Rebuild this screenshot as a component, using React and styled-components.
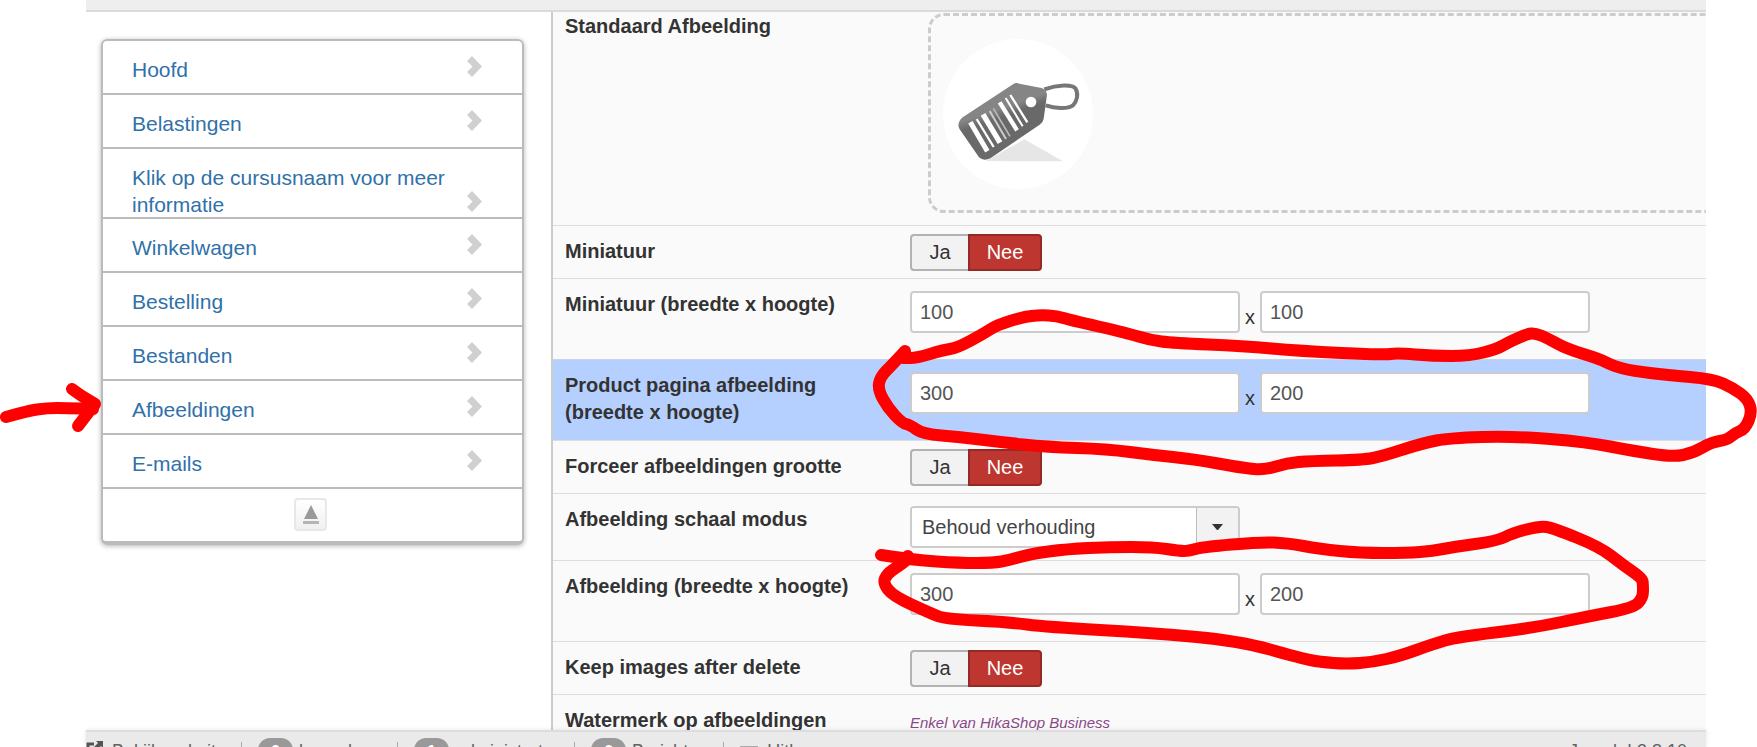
import { useState } from 'react';
import styled, { createGlobalStyle } from 'styled-components';

const menuItems = [
  'Hoofd',
  'Belastingen',
  'Klik op de cursusnaam voor meer informatie',
  'Winkelwagen',
  'Bestelling',
  'Bestanden',
  'Afbeeldingen',
  'E-mails',
];

const statusItems = [
  { count: 0, label: 'bezoekers' },
  { count: 1, label: 'administrator' },
  { count: 0, label: 'Berichten' },
];

// hand drawn markers, as points along each stroke
const strokes = [
  [[6, 417], [27, 411], [47, 408], [67, 408], [93, 409]],
  [[72, 389], [80, 395], [95, 404], [95, 404], [88, 413], [78, 426]],
  [
    [905, 351], [893, 364], [880, 377], [878, 390], [888, 408], [902, 423], [910, 425], [923, 434],
    [960, 437], [1000, 442], [1047, 447], [1107, 449], [1153, 455], [1193, 459], [1243, 468],
    [1265, 470], [1287, 463], [1310, 461], [1363, 460], [1383, 456], [1423, 443], [1450, 438],
    [1513, 436], [1587, 442], [1633, 451], [1673, 457], [1693, 453], [1712, 442], [1727, 440],
    [1735, 433], [1745, 429], [1752, 413], [1748, 399], [1733, 388], [1713, 379], [1667, 375],
    [1633, 371], [1613, 366], [1600, 359], [1567, 349], [1547, 338], [1535, 333], [1527, 334],
    [1507, 343], [1497, 349], [1470, 356], [1433, 356], [1397, 353], [1383, 355], [1300, 351],
    [1243, 346], [1173, 343], [1150, 340], [1127, 333], [1070, 320], [1057, 316], [1040, 315],
    [1023, 317], [997, 325], [983, 334], [957, 348], [943, 350], [917, 358], [903, 358],
  ],
  [
    [881, 555], [913, 560], [960, 563], [993, 563], [1010, 560], [1030, 554], [1067, 549],
    [1110, 547], [1153, 547], [1180, 551], [1188, 551], [1203, 547], [1260, 542], [1287, 543],
    [1320, 549], [1360, 553], [1407, 553], [1433, 551], [1453, 547], [1497, 541], [1513, 533],
    [1540, 526], [1553, 528], [1600, 547], [1623, 565], [1642, 578], [1643, 584], [1643, 598],
    [1633, 608], [1590, 616], [1533, 628], [1457, 637], [1433, 644], [1400, 656], [1373, 662],
    [1347, 664], [1320, 662], [1300, 658], [1240, 641], [1153, 633], [1047, 627], [1007, 622],
    [945, 619], [930, 613], [893, 596], [883, 583], [887, 574], [897, 567], [907, 560], [908, 556],
  ],
];

const toPath = (points) => {
  const last = points[points.length - 1];
  const curves = points.slice(1, -1).map(([x, y], i) => {
    const [nx, ny] = points[i + 2];
    return `Q${x} ${y} ${(x + nx) / 2} ${(y + ny) / 2}`;
  });
  return `M${points[0].join(' ')} ${curves.join(' ')} L${last.join(' ')}`;
};

const TagPicture = () => (
  <svg width="150" height="150" viewBox="42 -63 450 450" role="img" aria-label="Standaard afbeelding">
    <defs>
      <linearGradient id="tagFill" x1="0" y1="0" x2="0.4" y2="1">
        <stop offset="0.45" stopColor="#858585" />
        <stop offset="0.55" stopColor="#696969" />
      </linearGradient>
    </defs>
    <circle cx="267" cy="162" r="225" fill="#fff" />
    <path d="M170 303L286 238L402 304Z" fill="#e6e6e6" />
    <path
      d="M346 88C385 74 430 72 440 86C449 102 444 124 432 136C414 149 376 144 350 136"
      fill="none"
      stroke="#777"
      strokeWidth="12"
    />
    <path
      d="M252 73Q261 66 271 71L338 84Q352 88 354 104L344 176Q342 188 332 194L184 295Q164 305 150 292L92 208Q83 193 95 178Q99 172 108 167Z"
      fill="url(#tagFill)"
    />
    <circle cx="306" cy="126" r="16" fill="#fff" />
    <g stroke="#fff" fill="none">
      <path d="M124 187L175 274" strokeWidth="15" />
      <path d="M143 177L194 261" strokeWidth="7" />
      <path d="M162 163L213 248" strokeWidth="16" />
      <path d="M182 153L231 237" strokeWidth="6" stroke="#ccc" />
      <path d="M193 145L243 229" strokeWidth="5" stroke="#bbb" />
      <path d="M212 127L264 211" strokeWidth="13" />
      <path d="M230 114L281 199" strokeWidth="6" />
      <path d="M244 105L295 187" strokeWidth="7" />
    </g>
  </svg>
);

const Chevron = () => (
  <svg width="15" height="21" viewBox="0 0 15 21" aria-hidden="true">
    <path d="M0 5L5 0L15 10.500L5 21L0 16L5.500 10.500Z" fill="#d0d0d0" />
  </svg>
);

const YesNo = ({ label }) => {
  const [value, setValue] = useState(false);
  return (
    <ButtonGroup role="group" aria-label={label}>
      <YesButton type="button" aria-pressed={value} onClick={() => setValue(true)}>
        Ja
      </YesButton>
      <NoButton type="button" aria-pressed={!value} onClick={() => setValue(false)}>
        Nee
      </NoButton>
    </ButtonGroup>
  );
};

const SizeFields = ({ id, label, width, height }) => (
  <Sizes>
    <TextInput id={id} type="text" defaultValue={width} />
    <Times>x</Times>
    <TextInput type="text" defaultValue={height} aria-label={`${label} hoogte`} />
  </Sizes>
);

const App = () => (
  <>
    <GlobalStyle />
    <Page>
      <TopBar />
      <Content>
        <Sidebar>
          <Menu>
            {menuItems.map((item) => (
              <MenuLink href="#" key={item} $long={item.length > 30}>
                <span>{item}</span>
                <Chevron />
              </MenuLink>
            ))}
            <MenuFooter>
              <CollapseButton type="button" aria-label="Inklappen">
                <svg width="16" height="20" viewBox="0 0 16 20" aria-hidden="true">
                  <path d="M8 0L15 14H1Z" fill="#999" />
                  <path d="M0 16H16V19H0Z" fill="#b5b5b5" />
                </svg>
              </CollapseButton>
            </MenuFooter>
          </Menu>
        </Sidebar>
        <Settings>
          <ImageRow>
            <Name as="span">Standaard Afbeelding</Name>
            <DropZone>
              <TagPicture />
            </DropZone>
          </ImageRow>
          <Row>
            <Name as="span">Miniatuur</Name>
            <YesNo label="Miniatuur" />
          </Row>
          <Row>
            <Name htmlFor="thumb">Miniatuur (breedte x hoogte)</Name>
            <SizeFields id="thumb" label="Miniatuur" width="100" height="100" />
          </Row>
          <Row $active>
            <Name htmlFor="product">
              Product pagina afbeelding
              <br />
              (breedte x hoogte)
            </Name>
            <SizeFields id="product" label="Product pagina afbeelding" width="300" height="200" />
          </Row>
          <Row>
            <Name as="span">Forceer afbeeldingen grootte</Name>
            <YesNo label="Forceer afbeeldingen grootte" />
          </Row>
          <Row>
            <Name htmlFor="scale">Afbeelding schaal modus</Name>
            <SelectBox>
              <Select id="scale" defaultValue="keep">
                <option value="keep">Behoud verhouding</option>
              </Select>
              <SelectArrow>
                <svg width="11" height="6" viewBox="0 0 11 6" aria-hidden="true">
                  <path d="M0 0H11L6 6H5Z" fill="#333" />
                </svg>
              </SelectArrow>
            </SelectBox>
          </Row>
          <Row>
            <Name htmlFor="image">Afbeelding (breedte x hoogte)</Name>
            <SizeFields id="image" label="Afbeelding" width="300" height="200" />
          </Row>
          <Row>
            <Name as="span">Keep images after delete</Name>
            <YesNo label="Keep images after delete" />
          </Row>
          <Row>
            <Name as="span">Watermerk op afbeeldingen</Name>
            <Hint href="#">Enkel van HikaShop Business</Hint>
          </Row>
        </Settings>
      </Content>
      <StatusBar>
        <StatusLink href="#">
          <svg width="17" height="17" viewBox="0 0 17 17" aria-hidden="true">
            <path d="M8 3H2V15H14V11" fill="none" stroke="#555" strokeWidth="3" />
            <path d="M10 0H17V7L15 5L9 11L6 8L12 2Z" fill="#555" />
          </svg>
          Bekijk website
        </StatusLink>
        {statusItems.map(({ count, label }) => (
          <StatusItem key={label}>
            <Badge>{count}</Badge>
            {label}
          </StatusItem>
        ))}
        <StatusItem>
          <Dash />
          Uitloggen
        </StatusItem>
        <Version>Joomla! 3.8.10</Version>
      </StatusBar>
    </Page>
    <Markers aria-hidden="true">
      {strokes.map((points) => (
        <path key={points[0].join()} d={toPath(points)} />
      ))}
    </Markers>
  </>
);

const GlobalStyle = createGlobalStyle`
  * {
    box-sizing: border-box;
  }

  body {
    margin: 0;
    overflow: hidden;
    background: #fff;
    color: #333;
    font-family: 'Liberation Sans', Arial, sans-serif;
    font-size: 20px;
    line-height: 27px;
  }

  a {
    text-decoration: none;
  }

  button,
  input,
  select {
    margin: 0;
    font: inherit;
  }
`;

const Page = styled.div`
  display: flex;
  flex-direction: column;
  height: 100vh;
  padding: 0 51px 0 86px;
  overflow: hidden;
`;

const TopBar = styled.header`
  flex: none;
  height: 12px;
  background: #eee;
  border-bottom: 2px solid #dadada;
`;

const Content = styled.div`
  display: flex;
  flex: 1;
  min-height: 0;
  overflow: hidden;
`;

const Sidebar = styled.aside`
  flex: none;
  width: 465px;
  padding: 27px 27px 0 15px;
`;

const Menu = styled.nav`
  border: 2px solid #bbb;
  border-bottom-width: 4px;
  border-radius: 6px;
  box-shadow: 0 1px 5px rgba(0, 0, 0, 0.3);
`;

const MenuLink = styled.a`
  display: flex;
  justify-content: space-between;
  height: ${(props) => (props.$long ? '70px' : '54px')};
  padding: 15px 40px 0 29px;
  border-bottom: 2px solid #bbb;
  color: #3071a9;
  font-size: 21px;

  span {
    max-width: 320px;
  }

  svg {
    flex: none;
    margin-top: ${(props) => (props.$long ? '27px' : '0')};
  }
`;

const MenuFooter = styled.div`
  display: flex;
  justify-content: center;
  height: 52px;
  padding: 9px 4px 0 0;
`;

const CollapseButton = styled.button`
  display: flex;
  justify-content: center;
  align-items: center;
  width: 33px;
  height: 33px;
  padding: 0;
  background: linear-gradient(#fff, #f0f0f0);
  border: 2px solid #e8e8e8;
  border-radius: 4px;
`;

const Settings = styled.form`
  flex: 1;
  min-width: 0;
  overflow: hidden;
  background: #fafafa;
  border-left: 2px solid #ccc;
`;

const Row = styled.div`
  display: flex;
  align-items: flex-start;
  padding-left: 12px;
  border-top: 1px solid ${(props) => (props.$active ? '#c8d4e8' : '#ddd')};
  background: ${(props) => (props.$active ? '#b5d0ff' : 'transparent')};
`;

const ImageRow = styled.div`
  display: flex;
  height: 213px;
  padding-left: 12px;
`;

const Name = styled.label`
  flex: none;
  width: 345px;
  padding-top: 12px;
  font-weight: 700;

  ${ImageRow} & {
    padding-top: 1px;
  }
`;

const DropZone = styled.div`
  flex: 1;
  height: 200px;
  margin: 1px -20px 0 18px;
  padding: 23px 12px;
  border: 3px dashed #ccc;
  border-radius: 16px;
`;

const ButtonGroup = styled.div`
  display: flex;
  padding: 8px 0 7px;
`;

const YesButton = styled.button`
  width: 58px;
  height: 37px;
  padding: 0;
  background: #f2f2f2;
  border: 2px solid #b3b3b3;
  border-right: 0;
  border-radius: 4px 0 0 4px;
  color: #333;
`;

const NoButton = styled.button`
  width: 74px;
  height: 37px;
  padding: 0;
  background: #bd362f;
  border: 2px solid #942a25;
  border-radius: 0 4px 4px 0;
  color: #fff;
`;

const Sizes = styled.div`
  display: flex;
  padding: 12px 0 26px;
`;

const TextInput = styled.input`
  width: 330px;
  height: 42px;
  padding: 0 8px;
  background: #fff;
  border: 2px solid #ccc;
  border-radius: 4px;
  color: #555;
`;

const Times = styled.span`
  width: 20px;
  padding-top: 13px;
  text-align: center;
`;

const SelectBox = styled.div`
  display: flex;
  width: 330px;
  height: 42px;
  margin: 12px 0;
  overflow: hidden;
  background: #fff;
  border: 2px solid #ccc;
  border-radius: 4px;
`;

const Select = styled.select`
  flex: 1;
  min-width: 0;
  padding: 0 10px;
  appearance: none;
  background: #fff;
  border: 0;
  color: #444;
`;

const SelectArrow = styled.span`
  display: flex;
  justify-content: center;
  align-items: center;
  width: 42px;
  background: #f2f2f2;
  border-left: 1px solid #bbb;
  pointer-events: none;
`;

const Hint = styled.a`
  padding-top: 14px;
  color: #8b4789;
  font-size: 15px;
  font-style: italic;
`;

const StatusBar = styled.footer`
  display: flex;
  flex: none;
  height: 17px;
  padding: 5px 19px 0 0;
  overflow: hidden;
  background: #eaeaea;
  border-top: 2px solid #ddd;
  box-shadow: 0 0 5px rgba(0, 0, 0, 0.1);
  color: #626262;
  font-size: 18px;
  line-height: 28px;
  white-space: nowrap;
`;

const StatusLink = styled.a`
  display: flex;
  gap: 9px;
  width: 155px;
  color: #626262;

  svg {
    flex: none;
    margin-top: 4px;
  }
`;

const StatusItem = styled.div`
  display: flex;
  gap: 6px;
  margin-right: 15px;

  &::before {
    content: '';
    width: 1px;
    height: 20px;
    margin: 5px 10px 0 0;
    background: #aaa;
  }
`;

const Badge = styled.span`
  width: 35px;
  height: 24px;
  margin-top: 1px;
  background: #999;
  border-radius: 12px;
  color: #fff;
  font-size: 17px;
  font-weight: 700;
  text-align: center;
`;

const Dash = styled.span`
  width: 18px;
  height: 3px;
  margin: 9px 3px 0 0;
  background: #aaa;
`;

const Version = styled.span`
  margin-left: auto;
`;

const Markers = styled.svg`
  position: absolute;
  top: 0;
  left: 0;
  width: 1757px;
  height: 747px;
  pointer-events: none;

  path {
    fill: none;
    stroke: #f00;
    stroke-width: 12px;
    stroke-linecap: round;
    stroke-linejoin: round;
  }
`;

export default App;
